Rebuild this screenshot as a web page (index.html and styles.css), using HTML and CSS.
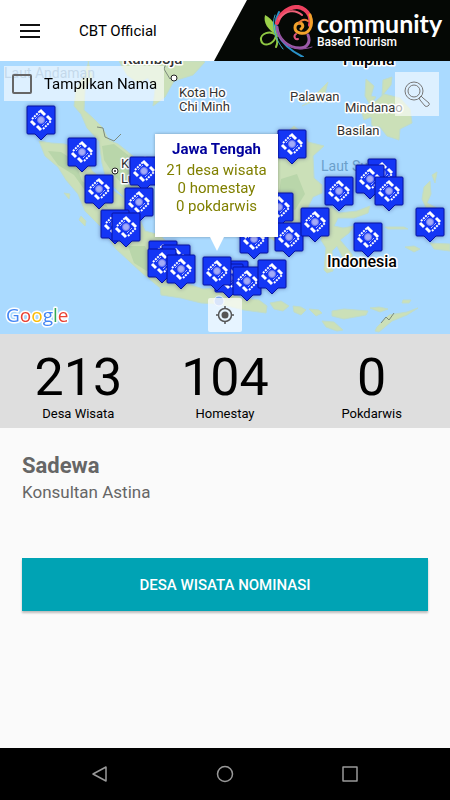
FILE: index.html
```
<!DOCTYPE html>
<html lang="id">
<head>
    <meta charset="UTF-8">
    <meta name="viewport" content="width=device-width, initial-scale=1.0">
    <title>CBT Official</title>
    <link rel="stylesheet" href="styles.css">
</head>
<body>
    <header class="header">
        <button class="menu-btn" aria-label="Menu">
            <svg width="20" height="16" viewBox="0 0 20 16"><path d="M0 2h20M0 8h20M0 14h20" stroke="#111" stroke-width="2"/></svg>
        </button>
        <h1 class="title">CBT Official</h1>
        <div class="brand">
            <svg class="brand-logo" width="54" height="52" viewBox="0 0 54 52" fill="none" stroke-linecap="round">
                <path d="M6 10c-2 8 3 15 12 20C18 22 14 14 6 10z" fill="#9bd04a"/>
                <path d="M18 31c-7-7-17-2-16 4 1 7 12 6 15-4 2 5 1 9 0 11" stroke="#8fc743" stroke-width="2"/>
                <path d="M20 7c-8 14-2 32 24 45" stroke="#2a91c8" stroke-width="2"/>
                <path d="M16 10c-4 10 0 24 8 34" stroke="#3aa7c7" stroke-width="1"/>
                <path d="M18 18C22 4 38-2 46 5c5 4 6 10 5 15" stroke="#ee4260" stroke-width="4"/>
                <path d="M20 14C27 5 36 4 43 10" stroke="#ef6078" stroke-width="2"/>
                <path d="M51 10c4 11-1 20-10 18-7-2-6-9-1-10 4 0 5 4 2 6" stroke="#f2a22b" stroke-width="3"/>
                <path d="M40 18c3-4 6-4 9-2" stroke="#ef7b38" stroke-width="2"/>
                <path d="M49 30c3 7-1 13-8 13C29 43 19 34 18 22" stroke="#9b5aa8" stroke-width="3"/>
                <path d="M19 26c3 13 17 22 34 16" stroke="#8e4e9c" stroke-width="1"/>
                <path d="M37 29c-3 2-1 6 2 5" stroke="#e0567e" stroke-width="2"/>
            </svg>
            <div class="brand-text">
                <span class="brand-name">community</span>
                <span class="brand-sub">Based Tourism</span>
            </div>
        </div>
    </header>

    <section class="map">
        <svg class="map-canvas" viewBox="0 61 450 273">
            <defs>
                <!-- the origin of a marker is the tip of its tail -->
                <g id="marker">
                    <path d="M-13-34h26q1 0 1 1v26q0 1-1 1H6L0 0l-6-6h-7q-1 0-1-1v-26q0-1 1-1z" fill="#1436f5" stroke="#0713a0"/>
                    <g fill="none" stroke="#fff">
                        <path d="M-1-30L4-25M6-24l4 4M-10-19l4 4M-4-14l4 4" stroke-width="3"/>
                        <path d="M-9-21l8-8M2-11l8-8" stroke-width="2" stroke-dasharray="2 1"/>
                        <path d="M-6-21l5-5M1-14l5-5" stroke-width="1" stroke-dasharray="1 1"/>
                    </g>
                    <circle cy="-20" r="3.5" fill="#a3abf7" stroke="#6c78f2"/>
                </g>
            </defs>
            <rect y="61" width="450" height="273" fill="#aadaff"/>
            <g class="land">
                <!-- mainland and Malay peninsula -->
                <path d="M89 61l-5 14-8 15-2 16 7 8 6 14 12 13 3 22 3 12 9 12 17 17 15 7 4-5-3-19-7-21-7-10-15-12-9-4-7-13-9-9-9-8 1-20 7-13-4-16z"/>
                <path d="M119 61l8 14 11 8 10-5 7 12-2 16 12-9 9-16 19-6 12-13-2-1z"/>
                <!-- Sumatra -->
                <path d="M39 141l6 15 13 11 8 13 12 14 7 17 18 18 12 19 14 13 13 12 17 14 12 1 3-22-2-18-12-13-15-4-6-14-10-16-14-9-11-12-12-9-7-17-20-10-14-1z"/>
                <!-- Java and the islands east of it -->
                <path d="M160 287l22-5 21 7 18-1 21 10 17 2 8 6-1 7-22-3-25-6-18-1-20-5-20-3z"/>
                <path d="M270 303l11-2 8 5-6 5-9-2zM293 306l8 1 5 3-5 5-7-3zM309 309l10 1 3 3-6 3zM332 311l12-2 24 2-2 4-22 4-12-3zM370 308l9-1 9 2-8 3zM322 321l12 1 9 8-6 1-11-4zM377 327l12-12 18-3 11-4-11 7-15 6-13 11-4-1z"/>
                <path d="M403 300l8 0-2 3-7 0zM405 247l9-1 6 3-6 3zM430 243l20 1v7l-16-2zM385 227l19 0 4 2-20 0z"/>
                <!-- Borneo -->
                <path d="M247 170l16-5 12-8 4-18 15-13 11 9 3 7 16 4-11 10 1 22 8 7 0 8-9 4-9 18-5 10-6 17-12 3-14-9-17 0-11-18-2-25z"/>
                <!-- Sulawesi -->
                <path d="M326 215l5-9 8 7 18-2 13-5-2 7-14 5-16 0-4 8 9 2 11-2-5 7-9 7 12 14 2 10-8 0-9-18-5 5 1 20-6 2-3-3 2-22-5-8z"/>
                <path d="M424 187l6-6 1 13-4 9 10 5-11 0-4-9zM432 175l5-3-2 11z"/>
                <!-- Philippines -->
                <path d="M307 103l21-21-4 15-22 9zM366 79l8 7-3 10 5 1-6 8-5-9zM383 80l9-3-1 8-9 11zM360 107l15-5 9-8 16 4 10 11 2 14-12 6-1 11-12-4-7-9-8-1-1-9-7 3z"/>
                <path d="M81 216l5 5-1 5-6-6zM64 193l6 1-1 5z"/>
            </g>
            <g fill="#b9d6aa">
                <path d="M102 146l12-2 14 11 6 19 9 24-16-9-13-14-10-15zM48 151l13 1 14 9 7 20 18 12 8 15-17-9-17-24-16-10zM281 179l16-5 8 20-10 16-17-9zM128 246l17 0 5 12 0 15-16-10z"/>
            </g>
            <path d="M97 127l6 1 2 9 9 4 7-7M167 61l-3 8 6 10 4-3M381 323l5-6 3 3 5-7" fill="none" stroke="#7c8a7c"/>
            <circle cx="174" cy="78" r="3" fill="#fff" stroke="#222"/>
            <circle cx="115" cy="171" r="3" fill="#fff" stroke="#222"/>
            <circle cx="115" cy="171" r="1" fill="#222"/>
            <g class="map-label">
                <text class="sea" x="4" y="78">Laut Andaman</text>
                <text class="country-small" x="123" y="64">Kamboja</text>
                <text class="country" x="343" y="65">Filipina</text>
                <text x="179" y="97">Kota Ho</text>
                <text x="179" y="111">Chi Minh</text>
                <text x="290" y="101">Palawan</text>
                <text x="345" y="112">Mindanao</text>
                <text x="337" y="135">Basilan</text>
                <text class="sea" x="321" y="171">Laut Sulu</text>
                <text x="121" y="168">Kuala</text>
                <text x="121" y="183">Lumpur</text>
                <text class="country" x="327" y="267">Indonesia</text>
            </g>
            <g class="markers">
                <use href="#marker" x="41" y="140"/>
                <use href="#marker" x="82" y="172"/>
                <use href="#marker" x="99" y="209"/>
                <use href="#marker" x="144" y="191"/>
                <use href="#marker" x="139" y="222"/>
                <use href="#marker" x="115" y="244"/>
                <use href="#marker" x="126" y="247"/>
                <use href="#marker" x="163" y="275"/>
                <use href="#marker" x="176" y="279"/>
                <use href="#marker" x="162" y="283"/>
                <use href="#marker" x="181" y="289"/>
                <use href="#marker" x="234" y="295"/>
                <use href="#marker" x="229" y="298"/>
                <use href="#marker" x="217" y="291"/>
                <use href="#marker" x="247" y="301"/>
                <use href="#marker" x="272" y="294"/>
                <use href="#marker" x="292" y="164"/>
                <use href="#marker" x="279" y="227"/>
                <use href="#marker" x="254" y="259"/>
                <use href="#marker" x="289" y="257"/>
                <use href="#marker" x="315" y="242"/>
                <use href="#marker" x="339" y="211"/>
                <use href="#marker" x="382" y="193"/>
                <use href="#marker" x="370" y="199"/>
                <use href="#marker" x="389" y="211"/>
                <use href="#marker" x="368" y="257"/>
                <use href="#marker" x="430" y="242"/>
            </g>
            <circle cx="219" cy="301" r="5" fill="#7fa9ee" stroke="#e4edfb"/>
            <text class="google" x="6" y="322"><tspan fill="#4285f4">G</tspan><tspan fill="#ea4335">o</tspan><tspan fill="#fbbc05">o</tspan><tspan fill="#4285f4">g</tspan><tspan fill="#34a853">l</tspan><tspan fill="#ea4335">e</tspan></text>
        </svg>

        <label class="show-names">
            <input type="checkbox" class="names-check">
            Tampilkan Nama
        </label>
        <button class="search-btn" aria-label="Cari">
            <svg width="28" height="28" viewBox="0 0 28 28" fill="none" stroke="#777">
                <circle cx="11" cy="11" r="9"/>
                <circle cx="11" cy="11" r="6"/>
                <path d="M16 18l2-2 2 2 6 5q1 2-1 3t-3 0l-5-6z"/>
            </svg>
        </button>
        <div class="popup">
            <h2 class="popup-title">Jawa Tengah</h2>
            <p>21 desa wisata</p>
            <p>0 homestay</p>
            <p>0 pokdarwis</p>
        </div>
        <button class="locate-btn" aria-label="Lokasi saya">
            <svg width="18" height="18" viewBox="0 0 18 18" fill="none" stroke="#555" stroke-width="1.5">
                <circle cx="9" cy="9" r="6.5"/>
                <circle cx="9" cy="9" r="3.5" fill="#555" stroke="none"/>
                <path d="M9 0v3M9 15v3M0 9h3M15 9h3"/>
            </svg>
        </button>
    </section>

    <section class="stats">
        <div class="stat">
            <span class="stat-number">213</span>
            <span class="stat-label">Desa Wisata</span>
        </div>
        <div class="stat">
            <span class="stat-number">104</span>
            <span class="stat-label">Homestay</span>
        </div>
        <div class="stat">
            <span class="stat-number">0</span>
            <span class="stat-label">Pokdarwis</span>
        </div>
    </section>

    <main class="profile">
        <h2 class="profile-name">Sadewa</h2>
        <p class="profile-role">Konsultan Astina</p>
        <button class="btn">DESA WISATA NOMINASI</button>
    </main>

    <nav class="navbar">
        <button class="nav-btn" aria-label="Kembali">
            <svg width="18" height="18" viewBox="0 0 18 18"><path d="M15 2v14L2 9z"/></svg>
        </button>
        <button class="nav-btn" aria-label="Beranda">
            <svg width="18" height="18" viewBox="0 0 18 18"><circle cx="9" cy="9" r="7.5"/></svg>
        </button>
        <button class="nav-btn" aria-label="Aplikasi terbaru">
            <svg width="18" height="18" viewBox="0 0 18 18"><rect x="2" y="2" width="14" height="14"/></svg>
        </button>
    </nav>
</body>
</html>
```
FILE: styles.css
```
* {
    box-sizing: border-box;
}
body {
    font-family: Roboto, Arial, sans-serif;
    background-color: #fafafa;
    color: #000;
    display: flex;
    flex-direction: column;
    min-height: 100vh;
    margin: 0;
}
h1, h2, p {
    margin: 0;
}
button {
    font-family: inherit;
    border: none;
    padding: 0;
    cursor: pointer;
}
svg {
    display: block;
}
.header {
    display: flex;
    align-items: center;
    height: 61px;
    padding-left: 20px;
    background: white;
}
.menu-btn {
    background: none;
}
.title {
    margin-left: 39px;
    font-size: 15px;
    font-weight: 400;
}
.brand {
    display: flex;
    align-items: center;
    gap: 4px;
    width: 236px;
    height: 61px;
    margin-left: auto;
    padding-left: 45px;
    background: #050805;
    clip-path: polygon(33px 0, 100% 0, 100% 100%, 0 100%);
}
.brand-logo {
    flex: none;
}
.brand-text {
    display: flex;
    flex-direction: column;
    padding-bottom: 2px;
    color: white;
}
.brand-name {
    font-family: Lato, sans-serif;
    font-size: 25px;
    font-weight: 700;
    line-height: 24px;
}
.brand-sub {
    font-size: 12px;
    font-weight: 500;
    line-height: 14px;
}
.map {
    position: relative;
}
.map-canvas {
    width: 100%;
}
.land {
    fill: #cbe0b8;
    stroke: #bfdccb;
}
.map-label {
    font-size: 13px;
    fill: #333;
    stroke: white;
    stroke-width: 3px;
    stroke-linejoin: round;
    paint-order: stroke;
}
.map-label .sea {
    fill: #6b9fcb;
    font-size: 14px;
    stroke: none;
}
.map-label .country {
    fill: #000;
    font-size: 16px;
    font-weight: 500;
}
.map-label .country-small {
    font-size: 15px;
    font-weight: 500;
}
.markers {
    filter: drop-shadow(0 0 2px rgba(0, 0, 80, 0.4));
}
.google {
    font-family: "Open Sans", sans-serif;
    font-size: 19px;
    font-weight: 500;
    stroke: white;
    stroke-width: 3px;
    stroke-linejoin: round;
    paint-order: stroke;
}
.show-names {
    position: absolute;
    top: 5px;
    left: 4px;
    display: flex;
    align-items: center;
    gap: 12px;
    width: 160px;
    height: 35px;
    padding-left: 8px;
    font-size: 15px;
    white-space: nowrap;
    background: rgba(255, 255, 255, 0.6);
}
.names-check {
    appearance: none;
    width: 20px;
    height: 20px;
    margin: 0;
    border: 2px solid #666;
    border-radius: 2px;
}
.search-btn {
    position: absolute;
    top: 11px;
    right: 11px;
    display: grid;
    place-items: center;
    width: 44px;
    height: 44px;
    background: rgba(255, 255, 255, 0.6);
}
.popup {
    position: absolute;
    top: 73px;
    left: 155px;
    width: 123px;
    height: 103px;
    padding-top: 5px;
    font-size: 15px;
    line-height: 18px;
    text-align: center;
    color: #808000;
    background: white;
    box-shadow: 0 0 3px rgba(0, 0, 0, 0.3);
}
.popup::after {
    content: "";
    position: absolute;
    top: 100%;
    left: 55px;
    border: 7px solid transparent;
    border-top: 14px solid white;
    border-bottom: 0;
}
.popup-title {
    margin-bottom: 2px;
    font-size: 15px;
    line-height: 20px;
    color: #00009c;
}
.locate-btn {
    position: absolute;
    bottom: 2px;
    left: calc(50% - 17px);
    display: grid;
    place-items: center;
    width: 34px;
    height: 34px;
    background: rgba(255, 255, 255, 0.7);
    border-radius: 2px;
}
.stats {
    display: grid;
    grid-template-columns: repeat(3, 1fr);
    padding: 16px 5px 6px;
    background: #dedede;
}
.stat {
    display: flex;
    flex-direction: column;
    align-items: center;
}
.stat-number {
    font-size: 52px;
    line-height: 56px;
}
.stat-label {
    font-size: 13px;
    line-height: 16px;
}
.profile {
    display: flex;
    flex-direction: column;
    flex: 1;
    padding: 24px 22px;
    color: #666;
}
.profile-name {
    font-size: 22px;
    line-height: 28px;
}
.profile-role {
    font-size: 17px;
    line-height: 24px;
}
.btn {
    height: 53px;
    margin-top: 54px;
    font-size: 15px;
    font-weight: 500;
    background: #00a3b4;
    color: white;
    box-shadow: 0 2px 2px rgba(0, 0, 0, 0.25);
}
.btn:hover {
    opacity: 0.9;
}
.navbar {
    display: grid;
    grid-template-columns: repeat(3, 1fr);
    height: 52px;
    padding: 0 38px;
    background: black;
}
.nav-btn {
    display: grid;
    place-items: center;
    background: none;
}
.nav-btn svg {
    fill: none;
    stroke: #999;
    stroke-width: 1.5;
    stroke-linejoin: round;
}
```
